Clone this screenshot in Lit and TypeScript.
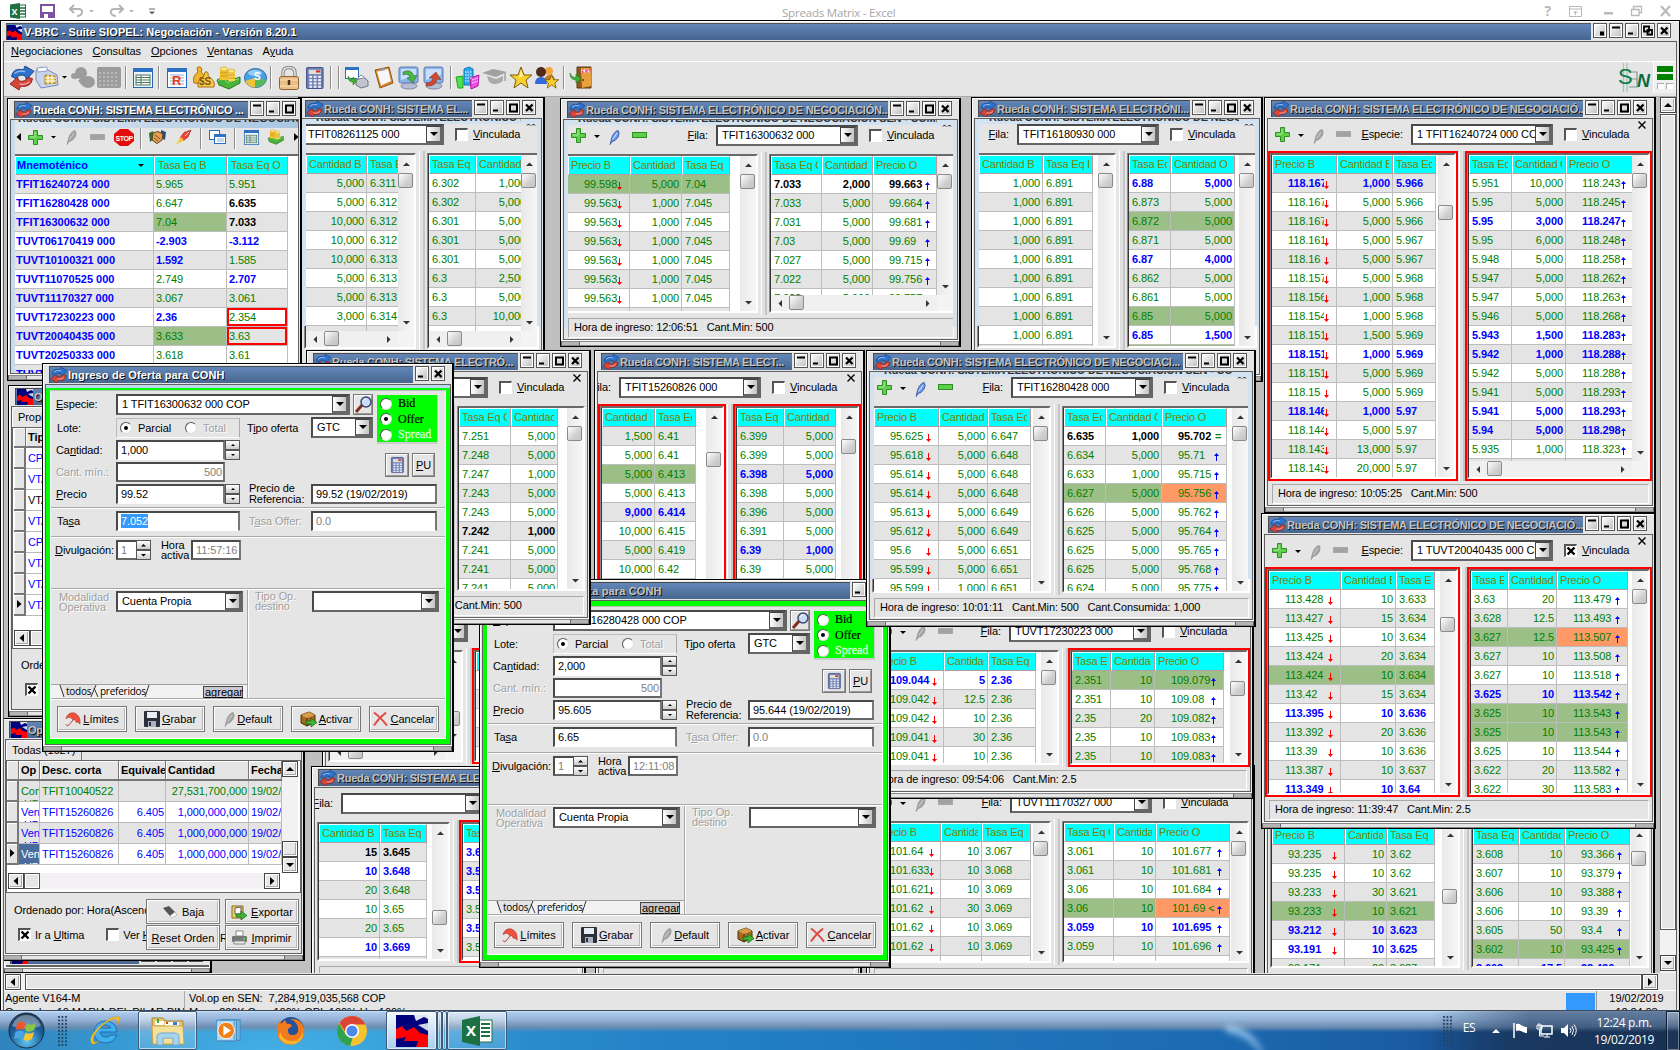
import { LitElement, html, svg, css, nothing } from "lit";

/* ---------- shared styles ---------- */
const base = css`
  * { box-sizing: border-box; }
  :host { font-family: "Liberation Sans", Arial, sans-serif; font-size: 11px; letter-spacing: -0.08px; color: #000; line-height: 12px; }
  u { text-underline-offset: 1px; }
  svg { display: block; flex: none; overflow: visible; }
  .chk { width: 13px; height: 13px; background: #fff; border: 1px solid #fff; border-top: 2px solid #555; border-left: 2px solid #555; flex: none; display: flex; align-items: center; justify-content: center; }
  .cbtn { width: 16px; border: 1px solid #444; background: linear-gradient(90deg, #fff, #c4c4c4); border-right: 2px solid #666; border-bottom: 2px solid #666; display: flex; align-items: center; justify-content: center; flex: none; }
  .combo { height: 21px; border: 2px solid #666; border-top-color: #4a4a4a; border-left-color: #4a4a4a; background: #fff; display: flex; align-items: stretch; flex: none; overflow: hidden; }
  .combo span { flex: 1; min-width: 0; overflow: hidden; white-space: pre; padding: 2px 0 0 4px; }
`;

/* ---------- icons ---------- */
const S = (w: number, h: number, vb: string, c: unknown) => html`<svg width=${w} height=${h} viewBox=${vb}>${c}</svg>`;
const rueda = (n = 16) => S(n, n, "0 0 16 16", svg`
  <path d="M1 7Q2 1 9 2.500L10 0L16 3.500L11 9L10 6.500Q6 5 4 8.500Z" fill="#2d72cc" stroke="#173f80" stroke-width=".6"/>
  <path d="M3 5Q6 2.500 10 3.800" stroke="#8fbdf0" fill="none"/>
  <path d="M15 8.500Q14 14.500 7 13.500L6 16L0 12L5 7.500L6 10Q10 11 12 7.500Z" fill="#d8463a" stroke="#7f1d18" stroke-width=".6"/>
  <path d="M13 10.500Q10 13 6.500 12" stroke="#f2a49c" fill="none"/>`);
const siopel = (n = 16) => S(n, n, "0 0 16 16", svg`
  <rect width="16" height="16" fill="#00007c"/><path d="M9 0L10 3L14 1L16 2V0Z" fill="#dfe4ee"/><path d="M11 5L16 8V4Z" fill="#cfd5e4"/>
  <path d="M0 7L3 5.500L5 8L9 6L12 9L16 10V16H10L11 13L4 13L5 11L0 12Z" fill="#f00"/>`);
const down = (w = 8) => S(w, w / 2, "0 0 8 4", svg`<path d="M0 0H8L4 4Z" fill="#000"/>`);
const cross = (n = 7, w = 2) => S(n, n, "0 0 8 8", svg`<path d="M.5 .5L7.500 7.500M7.500 .5L.5 7.500" stroke="#000" stroke-width=${w}/>`);
const plus = () => S(15, 15, "0 0 15 15", svg`<path d="M5.500 .5H9.500V5.500H14.500V9.500H9.500V14.500H5.500V9.500H.5V5.500H5.500Z" fill="#62cf4c" stroke="#2f8f27"/><path d="M7 2V7H2" stroke="#a6eb94" fill="none"/>`);
const minus = (on: boolean) => S(15, 6, "0 0 15 6", svg`<rect x=".5" y=".5" width="14" height="5" fill=${on ? "#5fcf4a" : "#a2a2a2"} stroke=${on ? "#2f8f27" : "#a8a8a8"}/>`);
const pencil = (on: boolean, n = 15) => S(n * 0.75, n, "0 0 11 15", svg`<path d="M1 14.500L2.500 8Q5 1 9 .5Q11 3 9 7Q6 11.500 3 11.500Z" fill=${on ? "#6d98e6" : "#a4a4a4"} stroke=${on ? "#2c4fa0" : "#989898"} stroke-width=".8"/><path d="M3.500 9.500L8 3" stroke=${on ? "#dfe9ff" : "#d0d0d0"}/>`);
const arrowD = () => S(5, 8, "0 0 5 8", svg`<path d="M2 0H3V5H5L2.500 8L0 5H2Z" fill="#f00"/>`);
const arrowU = () => S(5, 8, "0 0 5 8", svg`<path d="M2 8H3V3H5L2.500 0L0 3H2Z" fill="#00f"/>`);
const tri = (d: string) => S(7, 7, "0 0 7 7", svg`<path d=${{ u: "M0 5L3.500 1.500L7 5Z", d: "M0 2L3.500 5.500L7 2Z", l: "M5 0L1.500 3.500L5 7Z", r: "M2 0L5.500 3.500L2 7Z" }[d] ?? ""} fill="#333"/>`);
const big = (d: string) => S(8, 8, "0 0 8 8", svg`<path d=${{ u: "M0 6L4 2L8 6Z", d: "M0 2L4 6L8 2Z", l: "M6 0L1.500 4L6 8Z", r: "M2 0L6.500 4L2 8Z" }[d] ?? ""} fill="#000"/>`);
const calcIcon = (n = 20) => S(n * 0.8, n, "0 0 16 20", svg`<rect x=".5" y=".5" width="15" height="19" rx="1" fill="#6f7fb4" stroke="#48568e"/><rect x="2.500" y="2.500" width="11" height="4" fill="#dbe2d4"/><path d="M9 4H13" stroke="#c33" stroke-width="2"/>
  ${[8, 11, 14, 17].map(y => [3, 7, 11].map(x => svg`<rect x=${x} y=${y} width="2.600" height="1.900" fill="#eef1fa"/>`))}`);
const gridIcon = (n = 20) => S(n, n, "0 0 20 20", svg`<rect x=".5" y=".5" width="19" height="19" fill="#eef4fb" stroke="#2a66b0"/><rect x="0" y="0" width="20" height="4" fill="#2c71c4"/><rect x="3" y="7" width="14" height="10" fill="#fff" stroke="#46765a"/><path d="M3 9.500H17M3 12H17M3 14.500H17M8 7V17" stroke="#46765a"/>`);
const handIcon = (n = 24) => S(n, n, "0 0 24 24", svg`<path d="M0 14L6 11L11 15L23 11L23 17L12 23L2 19Z" fill="#49b238" stroke="#2a7d20"/><path d="M1 14.500L6 12L11 16.500L22 12.500" stroke="#96e07c" fill="none"/><path d="M3 3H11V14H3Z" fill="#f2c32c"/><path d="M11 5H18V15H11Z" fill="#f7d552"/><ellipse cx="7" cy="3" rx="4" ry="2" fill="#fbe680" stroke="#c9951a" stroke-width=".6"/><ellipse cx="14.500" cy="5" rx="3.500" ry="2" fill="#fbe680" stroke="#c9951a" stroke-width=".6"/><path d="M3 7H11M3 10H11M11 9H18M11 12H18" stroke="#c9951a"/>`);
const starPath = "M12 1L15 9L23 9L17 14L19 22L12 17L5 22L7 14L1 9L9 9Z";
const monitor = (c: string, d: string) => S(22, 24, "0 0 22 24", svg`<rect x="1" y="1" width="19" height="16" rx="2" fill="#8db4e8" stroke="#5a7cb4"/><path d="M3 3H18V9L3 14Z" fill="#c9defa"/><ellipse cx="11" cy="20" rx="8" ry="3" fill="#b6bfd4" stroke="#7e8ba6"/><path d=${d} fill=${c} stroke="#333" stroke-width=".4"/>`);

const icons: Record<string, () => unknown> = {
  swap: () => rueda(24),
  register: () => S(24, 23, "0 0 24 23", svg`<path d="M1 4L6 1L11 3L22 9L23 19L6 22L1 14Z" fill="#c9d3ec" stroke="#7b8bb8"/><path d="M2 2L12 1L12 5L3 6Z" fill="#fff" stroke="#93a0c4"/><path d="M10 9L20 10L21 17L10 18Z" fill="#e8c046" stroke="#a98322"/><path d="M10 12H21M10 15H21M13 9V18M17 9V18" stroke="#fff"/>`),
  caret: () => down(5),
  blobs: () => S(24, 22, "0 0 24 22", svg`<circle cx="10" cy="6" r="6" fill="#9c9c9c"/><ellipse cx="4" cy="9" rx="4" ry="3" fill="#9c9c9c"/><ellipse cx="17" cy="15" rx="7" ry="6" fill="#9c9c9c"/><path d="M9 12L13 17" stroke="#9c9c9c" stroke-width="5"/>`),
  cal: () => S(24, 21, "0 0 24 21", svg`<rect width="24" height="21" rx="2" fill="#9c9c9c"/><path d="M2 6H22M2 10H22M2 14H22M2 18H22" stroke="#d6d6d6" stroke-dasharray="2 2"/>`),
  sep: () => S(3, 23, "0 0 3 23", svg`<path d="M.5 0V23" stroke="#8c8c8c"/><path d="M1.500 0V23" stroke="#fff"/>`),
  table: () => gridIcon(20),
  r: () => S(20, 20, "0 0 20 20", svg`<rect x=".5" y=".5" width="19" height="19" fill="#fff" stroke="#2466bd"/><rect width="20" height="4" fill="#2c71c4"/><path d="M3 7H17M3 10H17M3 13H17M3 16H17" stroke="#86b0dc"/><text x="5" y="17" font-size="13" font-weight="700" fill="#f03a10" font-family="Liberation Sans">R</text>`),
  bags: () => S(23, 23, "0 0 23 23", svg`<path d="M5 2Q8 -1 10 3L9 6Q16 12 12 18L2 17Q0 10 6 6Z" fill="#f0b52c" stroke="#a5701a"/><path d="M13 6Q17 5 16 10Q24 15 22 21H6Q5 14 12 10Z" fill="#f9cd4a" stroke="#a5701a"/><text x="7" y="19" font-size="10" font-weight="700" fill="#8c5208" font-family="Liberation Sans">$S</text>`),
  hand: () => handIcon(24),
  globe: () => S(23, 20, "0 0 23 20", svg`<ellipse cx="11.500" cy="10" rx="11" ry="9.500" fill="#4aa0e4" stroke="#2c6cb0"/><path d="M11 10L1 13Q4 19 11 19.500Z" fill="#f0c43a"/><path d="M11 10L22 12Q20 19 11 19.500Z" fill="#58bb5a"/><ellipse cx="11" cy="5" rx="7" ry="3" fill="#cce8fb" opacity=".6"/><text x="10" y="12" font-size="10" font-weight="700" fill="#fff" font-family="Liberation Sans">S</text>`),
  lock: () => S(20, 24, "0 0 20 24", svg`<path d="M4 12V7Q4 1.500 10 1.500Q16 1.500 16 7V12" fill="none" stroke="#8a8a8a" stroke-width="3.500"/><path d="M4 12V7Q4 1.500 10 1.500Q16 1.500 16 7V12" fill="none" stroke="#e2e2e2" stroke-width="1.500"/><rect x=".5" y="10.500" width="19" height="13" rx="2" fill="#e9bd84" stroke="#8d6231"/><path d="M1 14H19M1 20H19" stroke="#f9e0ba"/><path d="M10 14V19" stroke="#4b3215" stroke-width="2.500"/>`),
  calc: () => calcIcon(22),
  print: () => S(24, 22, "0 0 24 22", svg`<rect x=".5" y=".5" width="13" height="11" fill="#fff" stroke="#2a6ac0"/><rect width="14" height="3" fill="#2c71c4"/><path d="M11 13L19 10L23 14V19L16 21L11 18Z" fill="#bfc4ce" stroke="#6c7280"/><path d="M12 12L16 8L20 11Z" fill="#fff" stroke="#8a8f9c"/><path d="M3 9Q4 12 8 12V10L12 14L8 18V15Q3 15 3 9Z" fill="#3daf33" stroke="#1e7a18" stroke-width=".6"/>`),
  clip: () => S(20, 23, "0 0 20 23", svg`<path d="M1 4L15 1L19 17L6 22Z" fill="#d98a2e" stroke="#8e5312"/><path d="M3 5.500L14 3L17 15L7 19.500Z" fill="#f6f6fb"/><path d="M6 3L11 1V4L7 5Z" fill="#999"/>`),
  monG: () => monitor("#45b93a", "M5 6Q13 2 16 10L19 9L15 17L9 12L12 11Q10 7 5 9Z"),
  monR: () => monitor("#d9452c", "M3 20Q13 21 14 13L18 14L13 6L6 12L10 12Q9 17 3 17Z"),
  build: () => S(24, 23, "0 0 24 23", svg`<path d="M8 3L13 1L17 3V19H8Z" fill="#27a8f0" stroke="#1477b6"/><path d="M0 11L7 10V22H2Z" fill="#4fe052" stroke="#24a32a"/><path d="M14 12L23 9L22 20L15 23Z" fill="#f04ae8" stroke="#a520a0"/><path d="M9 6H16M9 9H16M9 12H16M9 15H14M16 14L22 12M16 17L22 15" stroke="#fff" stroke-dasharray="1.500 1"/>`),
  cap: () => S(25, 17, "0 0 25 17", svg`<path d="M0 4L11 0L25 3L14 8Z" fill="#a0a0a0"/><path d="M5 7L14 10L21 7V12Q14 18 7 13Z" fill="#ababab"/><path d="M23 4V12" stroke="#a0a0a0" stroke-width="1.500"/>`),
  star: () => S(24, 24, "0 0 24 24", svg`<path d=${starPath} fill="#f8d12c" stroke="#7d5a0e"/><path d="M12 4L14 10L10 12Z" fill="#fdf2a6"/>`),
  users: () => S(24, 24, "0 0 24 24", svg`<circle cx="14" cy="5" r="4" fill="#f1a640"/><path d="M9 16Q9 9 15 9Q20 9 20 15Z" fill="#c27a1c"/><circle cx="6" cy="6" r="5" fill="#52291a"/><path d="M0 18Q0 11 6 11Q12 11 12 18Z" fill="#2f68e0"/><path transform="translate(9 8) scale(.64)" d=${starPath} fill="#f8d12c" stroke="#7d5a0e" stroke-width="1.300"/>`),
  exit: () => S(22, 23, "0 0 22 23", svg`<path d="M7 1H21V22H7Z" fill="#8e5a1e" stroke="#5c3810"/><path d="M11 2H21V20L12 22Z" fill="#e8a03a"/><rect x="11" y="3" width="9" height="4" fill="#fff"/><text x="11.500" y="7" font-size="4.500" font-weight="700" fill="#e01010" font-family="Liberation Sans">EXIT</text><circle cx="13" cy="14" r="1" fill="#5c3810"/><path d="M0 7Q3 13 6 11V8L11 13L6 17V14Q0 14 0 7Z" fill="#3fae35" stroke="#1e7a18" stroke-width=".6"/>`),
  plus, minusOff: () => minus(false), pencilOff: () => pencil(false),
  tleft: () => big("l"), tright: () => big("r"),
  stop: () => S(20, 17, "0 0 20 17", svg`<path d="M6 0H14L20 5V12L14 17H6L0 12V5Z" fill="#e30c0c"/><text x="1.500" y="11.500" font-size="7" font-weight="700" fill="#fff" letter-spacing="-.4" font-family="Liberation Sans">STOP</text>`),
  shake: () => S(17, 14, "0 0 17 14", svg`<path d="M0 3L4 1L5 9L1 12Z" fill="#2e6f3a"/><path d="M17 2L12 0L12 8L16 10Z" fill="#274f86"/><path d="M4 3L9 1.500L14 4L13 10L8 13.500L3 10Z" fill="#e0a055" stroke="#6c3c10"/><path d="M6 5L11 9M5 8L9 11" stroke="#8a4f1a"/>`),
  rocket: () => S(15, 15, "0 0 15 15", svg`<path d="M15 0L8 2.500L4 8L7 11L12 7Z" fill="#f0443a" stroke="#9c1c14" stroke-width=".6"/><path d="M9 6L13 2" stroke="#ffd0c8"/><path d="M5 7L0 14.500L8 10.500Z" fill="#f9c52c"/>`),
  wins: () => S(17, 14, "0 0 17 14", svg`<rect x=".5" y=".5" width="10" height="9" fill="#fff" stroke="#2a6ac0"/><rect x="5.500" y="4.500" width="11" height="9" fill="#fff" stroke="#2a6ac0"/><rect x="5" y="4" width="12" height="3" fill="#2c71c4"/><path d="M8 9H15M8 11H15" stroke="#86b0dc"/>`),
  gridS: () => gridIcon(15), handS: () => handIcon(16),
  lens: () => S(17, 17, "0 0 17 17", svg`<path d="M1 16L8 8" stroke="#7e2c1c" stroke-width="3"/><circle cx="11" cy="6" r="5" fill="#c9dcf4" stroke="#3b4572" stroke-width="1.500"/><path d="M8 5Q9 3 11 3" stroke="#fff" fill="none"/>`),
  umbrella: () => S(16, 15, "0 0 17 16", svg`<path d="M1 7Q3 0 10 1Q17 4 16 13Q14 10 12 11Q11 7 8 8Q6 4 1 7Z" fill="#f0503e" stroke="#a82418" stroke-width=".6"/><path d="M9 8L4 14Q2 16 1 13" fill="none" stroke="#b83325"/>`),
  disk: () => S(16, 16, "0 0 16 16", svg`<rect width="16" height="16" rx="1" fill="#2b2f3a"/><rect x="3" y="1" width="10" height="6" fill="#e9ecf2"/><rect x="4" y="10" width="8" height="6" fill="#aab1c0"/><rect x="5" y="11" width="2" height="4" fill="#2b2f3a"/>`),
  quill: () => pencil(false, 15),
  box: () => S(17, 17, "0 0 17 17", svg`<path d="M1 4L9 1L15 4V11L7 15L1 12Z" fill="#a4691f" stroke="#51300a"/><path d="M1 4L7 7L15 4L9 1Z" fill="#d79d4c"/><path d="M7 7V15" stroke="#51300a"/><path d="M6 10H11V7L17 11.500L11 16V13H6Z" fill="#3fb535" stroke="#17660f" stroke-width=".7"/>`),
  redx: () => S(15, 16, "0 0 16 16", svg`<path d="M1 1Q8 6 15 15M14 1Q6 7 1 15" stroke="#df4a40" stroke-width="2" fill="none"/>`),
  eraser: () => S(16, 14, "0 0 16 14", svg`<path d="M1 3L7 1L13 7L8 11Z" fill="#555"/><path d="M8 11L13 7L15 10L10 13Z" fill="#fff" stroke="#999" stroke-width=".6"/>`),
  exportar: () => S(16, 16, "0 0 16 16", svg`<path d="M1 2H12V14H1Z" fill="#f3d06a" stroke="#8a6a1a"/><path d="M4 4L10 3V10H4Z" fill="#fff" stroke="#557"/><path d="M5 10H10V7L16 11.500L10 16V13H5Z" fill="#3fb535" stroke="#17660f" stroke-width=".7"/>`),
  printer: () => S(15, 14, "0 0 15 14", svg`<path d="M4 0H11V5H4Z" fill="#fff" stroke="#888"/><rect y="5" width="15" height="6" rx="1" fill="#777"/><path d="M2 10H13V13H2Z" fill="#ececec" stroke="#888"/><rect x="11" y="7" width="2" height="1.500" fill="#3f3"/>`),
};

/* ---------- MDI window frame ---------- */
const glyphs: Record<string, unknown> = {
  u: svg`<path d="M2 2H10V4H2Z" fill="#000"/>`,
  m: svg`<path d="M2 8H7V10H2Z" fill="#000"/>`,
  x: svg`<path d="M3 3H10V10H3Z" fill="none" stroke="#000" stroke-width="2"/>`,
  c: svg`<path d="M3 3L9.500 9.500M9.500 3L3 9.500" stroke="#000" stroke-width="2.300"/>`,
  d: svg`<rect x="6" y="7" width="4" height="4" fill="#000"/>`,
  r: svg`<path d="M2 2H7V7H2ZM5.500 5.500H10V10H5.500Z" fill="#eee" stroke="#000" stroke-width="1.800"/>`,
};
const winBtnCss = css`
  .btns { display: flex; gap: 2px; padding-left: 2px; flex: none; }
  .wb { width: 14px; height: 15px; border: 1px solid #555; outline: 1px solid #fff; outline-offset: -2px; background: linear-gradient(135deg, #fff, #bdbdbd); }
`;
const winBtns = (s: string) => html`<div class="btns">${[...s].map(k => html`<div class="wb"><svg width="12" height="13" viewBox="0 0 12 12">${glyphs[k]}</svg></div>`)}</div>`;

class MdiWindow extends LitElement {
  static properties = { heading: {}, icon: {}, active: { type: Boolean }, btns: {} };
  declare heading: string; declare icon: string; declare active: boolean; declare btns: string;
  static styles = [base, winBtnCss, css`
    :host { position: absolute; box-sizing: border-box; display: flex; flex-direction: column; background: #e5e5e5; border: 1px solid #000; border-right-width: 2px; box-shadow: inset 1px 1px #fff; overflow: hidden; }
    .tb { margin: 2px 7px 1px 6px; height: 17px; flex: none; display: flex; }
    :host(.narrow) .tb { margin-right: 4px; }
    .cap { flex: 1; min-width: 0; display: flex; align-items: center; gap: 1px; padding-left: 1px; background: linear-gradient(#6286b8, #48678f); border-top: 1px solid #4a4a4a; border-left: 1px solid #4a4a4a; overflow: hidden; }
    .t { font-weight: 700; color: #c4c4c4; white-space: pre; text-shadow: 1px 1px #111; letter-spacing: -0.26px; font-size: 11px; padding-bottom: 1px; }
    :host(.dlg) .t { letter-spacing: 0.14px; }
    .t.on { color: #fff; }
    .body { flex: 1; min-height: 0; margin: 0 1px 0 2px; border: 1px solid #606060; position: relative; display: flex; overflow: hidden; }
    ::slotted(*) { flex: 1; min-width: 0; }
    .foot { height: 6px; flex: none; border-top: 1px solid #fff; display: flex; }
    .foot i { height: 5px; border: 1px solid #888; border-width: 1px 0; flex: 1; }
    .foot i.k { flex: 0 0 19px; background: #b4b4b4; border-right: 1px solid #666; border-left: 1px solid #666; }
  `];
  render() {
    return html`<div class="tb"><div class="cap">${this.icon === "siopel" ? siopel(16) : rueda(16)}<span class="t ${this.active ? "on" : ""}">${this.heading}</span></div>${winBtns(this.btns ?? "umxc")}</div>
      <div class="body"><slot></slot></div><div class="foot"><i class="k"></i><i></i><i class="k"></i></div>`;
  }
}
customElements.define("mdi-window", MdiWindow);

/* ---------- order book ---------- */
type Col = [string, number, string];
interface Pane { cols: Col[]; rows: string[]; alt?: number; red?: boolean; thumb?: number; ar?: number; dir?: string; hs?: boolean }
interface Book { x: number; y: number; r: number; b: number; title: string; lw: number; lead?: number; icons?: string; label?: string; combo?: string; checked?: boolean; glass?: boolean; L: Pane; R: Pane; status?: string; btns?: string }

class BookView extends LitElement {
  static properties = { book: { attribute: false } };
  declare book: Book;
  static styles = [base, css`
    :host { display: flex; flex-direction: column; position: relative; background: #e5e5e5; overflow: hidden; }
    .bar { height: 32px; flex: none; display: flex; align-items: center; padding-bottom: 2px; }
    .lead { display: flex; align-items: center; flex: none; height: 100%; overflow: hidden; justify-content: flex-end; }
    .ic { display: flex; align-items: center; flex: none; padding-left: 7px; margin-right: auto; }
    .ic .a { margin: 2px 9px 0 8px; } .ic .p { margin: 0 12px 0 0; }
    .lead .lb { padding-right: 8px; flex: none; }
    .combo { width: 142px; }
    .chk { margin: 0 5px 0 11px; }
    .cl { margin: -19px 6px 0 auto; flex: none; }
    .panes { flex: 1; min-height: 0; display: flex; }
    .split { width: 7px; flex: none; border-left: 1px solid #e5e5e5; background: #e0e0e0; box-shadow: inset 1px 0 #fff, inset -2px 0 #c6c6c6; }
    .pane { flex: none; border: 2px solid #e5e5e5; display: flex; min-width: 0; }
    .pane.red { border-color: #f00; }
    .pane.rest { flex: 1; }
    .in { flex: 1; min-width: 0; border: 2px solid #fff; border-top-color: #6a6a6a; border-left: 2px ridge #8a8a8a; display: flex; flex-direction: column; background: #f4f4f4; }
    .area { flex: 1; min-height: 0; display: flex; overflow: hidden; }
    .tbl { flex: 1; min-width: 0; background: #fff; overflow: hidden; }
    .row { display: flex; height: 19px; width: max-content; }
    .c { border-right: 1px solid #bdbdbd; border-bottom: 1px solid #bdbdbd; height: 19px; padding: 3px 2px 0 3px; overflow: hidden; white-space: pre; color: #008000; background: #fff; flex: none; }
    .alt .c { background: #e4e4e4; }
    .q { text-align: right; }
    .B .c { color: #00f; font-weight: 700; } .K .c { color: #000; font-weight: 700; }
    .h .c { background: #9cbf87; }
    .o .c.p { background: #ff9966; }
    .c.p { display: flex; padding-left: 16px; padding-right: 0; }
    .v { overflow: hidden; flex: none; }
    .p svg { margin-top: 4px; }
    .eq { color: #008000; margin-left: 1px; }
    .hd .c { background: #0ff; color: #808000; border: 1px solid #b89a9a; border-top-color: #e8ffff; border-left-color: #fff; box-shadow: inset 0 -1px #0ff; padding: 2px 0 0 2px; letter-spacing: -0.2px; font-weight: 400; }
    .hd .c b { display: block; font-weight: 400; overflow: hidden; margin-right: 3px; }
    .vs { width: 16px; flex: none; background: linear-gradient(90deg, #e9e9e9, #f6f6f6); display: flex; flex-direction: column; align-items: center; padding: 6px 0 5px; position: relative; justify-content: space-between; }
    .hs { height: 16px; margin-right: 16px; flex: none; background: #f0f0f0; display: flex; align-items: center; justify-content: space-between; padding: 0 6px; position: relative; }
    .th { position: absolute; width: 15px; height: 15px; border: 1px solid #8a8a8a; border-radius: 2px; background: linear-gradient(135deg, #fff, #d0d0d0 60%, #c4c4c4); }
    .vs .th { left: 0; } .hs .th { left: 18px; top: 0; }
    .st { height: 24px; flex: none; padding: 3px 3px 1px 4px; }
    .st div { height: 20px; border: 1px solid #fff; border-top-color: #a8a8a8; border-left-color: #a8a8a8; padding: 2px 0 0 5px; white-space: pre; letter-spacing: -0.13px; }
    .glass { position: absolute; left: 0; right: 0; top: 0; height: 207px; border: solid #d2e2f0; border-width: 5px 4px 0 4px; pointer-events: none; }
    .ghost { position: absolute; left: 14px; right: 20px; top: 0; height: 2px; overflow: hidden; display: flex; align-items: flex-end; font-weight: 700; white-space: pre; line-height: 7px; color: #333; letter-spacing: -0.2px; }
  `];
  pane(p: Pane, w: number | null) {
    const cell = (v: string, [, cw, k]: Col) => k === "p"
      ? html`<div class="c p" style="width:${cw}px"><span class="v" style="width:${(p.ar ?? 54) - 18}px">${v.replace("=", "")}</span>${v.endsWith("=") ? html`<span class="eq">=</span>` : v === "" ? nothing : p.dir === "u" ? arrowU() : arrowD()}</div>`
      : html`<div class="c ${k}" style="width:${cw}px">${v}</div>`;
    return html`<div class="pane ${p.red ? "red" : ""} ${w === null ? "rest" : ""}" style=${w === null ? "" : `width:${w}px`}><div class="in">
      <div class="area"><div class="tbl">
        <div class="row hd">${p.cols.map(c => html`<div class="c" style="width:${c[1]}px"><b>${c[0]}</b></div>`)}</div>
        ${p.rows.map((r, i) => { const [f, ...v] = r.split("|"); return html`<div class="row ${(i + (p.alt ?? 0)) % 2 ? "alt" : ""} ${[...f].join(" ")}">${p.cols.map((c, j) => cell(v[j] ?? "", c))}</div>`; })}
      </div><div class="vs">${tri("u")}${tri("d")}<div class="th" style="top:${p.thumb ?? 18}px"></div></div></div>
      ${p.hs ? html`<div class="hs">${tri("l")}${tri("r")}<div class="th"></div></div>` : nothing}
    </div></div>`;
  }
  render() {
    const b = this.book;
    const on = b.icons === "on";
    return html`
      <div class="bar"><div class="lead" style="width:${b.lead ?? 0}px">
        ${b.icons ? html`<div class="ic">${plus()}<div class="a">${down(6)}</div><div class="p">${pencil(on)}</div>${minus(on)}</div>` : nothing}
        ${b.label ? html`<span class="lb"><u>${b.label[0]}</u>${b.label.slice(1)}</span>` : nothing}</div>
        <div class="combo"><span>${b.combo ?? ""}</span><div class="cbtn">${down(8)}</div></div>
        <div class="chk">${b.checked ? cross(8, 2.4) : nothing}</div><span><u>V</u>inculada</span>
        <div class="cl">${b.glass ? S(8, 3, "0 0 8 3", svg`<path d="M0 2.500L1.500 1L3 2.500M5 2.500L6.500 1L8 2.500" stroke="#000" fill="none"/>`) : cross(8, 1.4)}</div>
      </div>
      <div class="panes">${this.pane(b.L, b.lw)}<div class="split"></div>${this.pane(b.R, null)}</div>
      <div class="st"><div>${b.status ?? ""}</div></div>
      ${b.glass ? html`<div class="glass"></div><div class="ghost">${"Rueda CONH: SISTEMA ELECTRÓNICO DE NEGOCIACIÓN SEN - COM..."}</div>` : nothing}`;
  }
}
customElements.define("book-view", BookView);

/* ---------- order entry dialog ---------- */
class OrderForm extends LitElement {
  static properties = { d: { attribute: false } };
  declare d: { especie: string; cant: string; precio: string; ref: string; tasa: string; hora: string; sel?: boolean };
  static styles = [base, css`
    :host { display: flex; flex-direction: column; background: #e5e5e5; border: 5px solid #0f0; position: relative; margin: 0 -1px; }
    .in { flex: 1; display: flex; flex-direction: column; border: 1px solid #fff; border-top-color: #bbb; }
    .glass { position: absolute; left: -5px; right: -5px; top: -5px; height: 3px; background: #bcd8ee; }
    .r { display: flex; flex: none; }
    .lb { width: 65px; padding: 4px 0 0 5px; flex: none; white-space: pre; }
    .g { color: #a0a0a0; text-shadow: 1px 1px #fff; }
    .inp { height: 20px; border: 2px solid #777; border-top-color: #4a4a4a; border-left-color: #4a4a4a; border-bottom: 1px solid #fff; background: #fff; padding: 2px 0 0 3px; flex: none; white-space: pre; }
    .inp.d { color: #808080; border-bottom: 2px solid #666; }
    .inp em { font-style: normal; background: #3399ff; color: #fff; padding: 1px 0; }
    .w109 { width: 109px; } .w126 { width: 126px; } .w124 { width: 124px; }
    .spin { width: 15px; height: 20px; display: flex; flex-direction: column; flex: none; }
    .spin i { flex: 1; border: 1px solid #555; background: linear-gradient(#fff, #ccc); display: flex; align-items: center; justify-content: center; }
    .ic { border: 2px solid #999; border-top-color: #fff; border-left-color: #fff; outline: 1px solid #777; outline-offset: -1px; display: flex; align-items: center; justify-content: center; flex: none; background: #e5e5e5; }
    .side { width: 61px; height: 49px; margin: 4px 0 0 4px; background: #0f0; border-right: 1px solid #ccc; border-bottom: 2px solid #ccc; font: 12px/15.500px "Liberation Serif", serif; padding: 1px 0 0 3px; letter-spacing: 0; -webkit-text-stroke: .2px #000; }
    .side div, .lote div { display: flex; align-items: center; gap: 6px; }
    .side .g { color: #d8ffd8; text-shadow: none; -webkit-text-stroke: .3px #d8ffd8; }
    .rad { width: 12px; height: 12px; border-radius: 50%; background: #fff; border: 1px solid #555; border-right-color: #ddd; border-bottom-color: #ddd; display: flex; align-items: center; justify-content: center; flex: none; }
    .rad.s::after { content: ""; width: 4px; height: 4px; border-radius: 50%; background: #000; }
    .lote { width: 124px; height: 20px; border: 1px solid #bbb; border-right-color: #aaa; border-bottom-color: #fff; display: flex; gap: 14px; padding-left: 3px; align-items: center; flex: none; }
    .two { line-height: 10.500px; white-space: pre; }
    hr { border: 0; border-top: 1px solid #a8a8a8; border-bottom: 1px solid #fff; margin: 0; height: 2px; flex: none; }
    .low { flex: 1; min-height: 0; display: flex; }
    .lc { width: 197px; border-right: 1px solid #a8a8a8; box-shadow: 1px 0 #fff; display: flex; flex-direction: column; justify-content: space-between; }
    .tabs { height: 14px; border-top: 1px solid #a0a0a0; background: #f2f2f2; display: flex; font: 11px/12px "Open Sans", sans-serif; letter-spacing: -0.25px; padding-left: 9px; }
    .tabs .ag { margin: 1px 4px 0 auto; width: 40px; height: 12px; border: 1px solid #444; background: #c8c8d2; font: 11px/10px "Liberation Sans"; padding-left: 1px; letter-spacing: 0; text-decoration: underline; }
    .btns { height: 38px; padding: 6px 6px 0; display: flex; justify-content: space-between; flex: none; }
    .b { width: 70px; height: 26px; border: 1px solid #777; outline: 1px solid #fff; outline-offset: -2px; box-shadow: inset -2px -2px #b8b8b8; background: #e5e5e5; display: flex; align-items: center; justify-content: center; gap: 2px; letter-spacing: 0; }
    .c233 .combo { width: 234px; } .gtc .combo { width: 62px; } .cp .combo { width: 127px; }
  `];
  combo(t: string) { return html`<div class="combo"><span>${t}</span><div class="cbtn">${down(8)}</div></div>`; }
  spin(n = 4) { return html`<div class="spin"><i>${S(n, n / 2, "0 0 4 2", svg`<path d="M0 2H4L2 0Z"/>`)}</i><i>${S(n, n / 2, "0 0 4 2", svg`<path d="M0 0H4L2 2Z"/>`)}</i></div>`; }
  render() {
    const d = this.d;
    const btn = (i: string, a: string, t: string) => html`<div class="b">${icons[i]()}<span><u>${a}</u>${t}</span></div>`;
    return html`<div class="in">
      <div class="r" style="height:49px"><div>
        <div class="r c233" style="height:26px;padding-top:3px"><div class="lb"><u>E</u>specie:</div>${this.combo(d.especie)}<div class="ic" style="width:20px;height:21px;margin-left:3px">${icons.lens()}</div></div>
        <div class="r gtc" style="height:23px"><div class="lb" style="padding:5px 0 0 6px">Lote:</div><div class="lote" style="margin-top:1px"><div><i class="rad s"></i>Parcial</div><div class="g"><i class="rad"></i>Total</div></div><div class="lb" style="width:71px;padding:5px 0 0 7px">T<u>i</u>po oferta</div>${this.combo("GTC")}</div>
      </div><div class="side"><div><i class="rad"></i>Bid</div><div><i class="rad s"></i>Offer</div><div class="g"><i class="rad"></i>Spread</div></div></div>
      <div class="r" style="height:44px"><div>
        <div class="r" style="height:22px"><div class="lb">Ca<u>n</u>tidad:</div><div class="inp w109">${d.cant}</div>${this.spin()}</div>
        <div class="r" style="height:22px"><div class="lb g">Cant. mín.:</div><div class="inp d w109" style="text-align:right;padding-right:1px">500</div></div>
      </div><div class="r" style="padding:13px 0 0 145px;gap:3px;height:37px"><div class="ic" style="width:24px">${calcIcon(16)}</div><div class="ic" style="width:23px"><span><u>P</u>U</span></div></div></div>
      <div class="r" style="height:23px"><div class="lb"><u>P</u>recio</div><div class="inp w109">${d.precio}</div>${this.spin()}
        <div class="two" style="width:71px;padding-left:9px;margin-top:-1px">Precio de<br>Referencia:</div><div class="inp w126" style="border-bottom:2px solid #666">${d.ref}</div></div>
      <hr>
      <div class="r" style="height:27px;padding-top:2px"><div class="lb" style="padding-left:6px">Ta<u>s</u>a</div><div class="inp w124">${d.sel ? html`<em>${d.tasa}</em>` : d.tasa}</div><div class="lb g" style="width:71px;padding-left:9px">T<u>a</u>sa Offer:</div><div class="inp w126" style="color:#808080">0.0</div></div>
      <hr>
      <div class="r" style="height:50px;padding-top:2px"><div class="lb" style="padding-left:4px"><u>D</u>ivulgación:</div><div class="inp d" style="width:20px;border-right:0">1</div>${this.spin(5)}<div class="two" style="width:40px;padding:0 0 0 10px;line-height:10px">Hora<br>activa</div><div class="inp d" style="width:50px">${d.hora}</div></div>
      <hr>
      <div class="low"><div class="lc"><div class="r cp" style="padding-top:1px"><div class="two g" style="width:65px;padding:1px 0 0 8px;line-height:10px">Modalidad<br>Operativa</div>${this.combo("Cuenta Propia")}</div>
        <div class="tabs"><svg width="130" height="13" viewBox="0 0 130 13"><path d="M0 0L4 12H31L36 0Z" fill="#e5e5e5"/><path d="M38 12L34 3M0 0L4 12M36 0L31 12M89 0L85 12" stroke="#333" fill="none"/><text x="6" y="10" font-size="10">todos</text><text x="40" y="10" font-size="10">preferidos</text></svg><div class="ag">agregar</div></div></div>
        <div class="r cp" style="padding-top:1px"><div class="two g" style="width:64px;padding:0 0 0 7px;line-height:10px">Tipo Op.<br>destino</div>${this.combo("")}</div></div>
      <hr>
      <div class="btns">${btn("umbrella", "L", "ímites")}${btn("disk", "G", "rabar")}${btn("quill", "D", "efault")}${btn("box", "A", "ctivar")}${btn("redx", "C", "ancelar")}</div>
    </div>${d.sel ? html`<div class="glass"></div>` : nothing}`;
  }
}
customElements.define("order-form", OrderForm);

/* ---------- data ---------- */
const T = "Rueda CONH: SISTEMA ELECTRÓNICO DE NEGOCIACI";
const rep = (n: number, s: string) => Array.from({ length: n }, () => s);
const stub: Pane = { cols: [["", 60, "q"]], rows: [] };
const books: Record<string, Book> = {
  b2: { x: 298, y: 97, r: 545, b: 383, title: "Rueda CONH: SISTEMA EL...", lw: 116, lead: -2, combo: "TFIT08261125 000", glass: true,
    L: { cols: [["Cantidad B", 61, "q"], ["Tasa E", 40, "t"]], alt: 1, hs: true, rows: ["|5,000|6.311", "|5,000|6.312", "|10,000|6.312", "|10,000|6.312", "|10,000|6.313", "|5,000|6.313", "|5,000|6.313", "|3,000|6.314", "||"] },
    R: { cols: [["Tasa Eq", 47, "t"], ["Cantidad", 53, "q"]], hs: true, rows: ["|6.302|1,000", "|6.302|5,000", "|6.301|5,000", "|6.301|5,000", "|6.301|5,000", "|6.3|2,500", "|6.3|5,000", "|6.3|10,000", "||"] } },
  b3: { x: 560, y: 98, r: 961, b: 347, title: "Rueda CONH: SISTEMA ELECTRÓNICO DE NEGOCIACIÓN...", lw: 196, lead: 152, icons: "on", label: "Fila:", combo: "TFIT16300632 000", glass: true, status: "Hora de ingreso: 12:06:51   Cant.Min: 500",
    L: { cols: [["Precio B", 62, "p"], ["Cantidad", 52, "q"], ["Tasa Eq", 48, "t"]], ar: 51, rows: ["h|99.598|5,000|7.04", ...rep(6, "|99.563|1,000|7.045"), "|||"] },
    R: { cols: [["Tasa Eq O", 51, "t"], ["Cantidad", 51, "q"], ["Precio O", 64, "p"]], ar: 54, dir: "u", hs: true, rows: ["K|7.033|2,000|99.663", "|7.033|5,000|99.664", "|7.031|5,000|99.681", "|7.03|5,000|99.69", "|7.027|5,000|99.715", "|7.022|5,000|99.756", "|7.022|5,000|99.757"] } },
  b4: { x: 971, y: 97, r: 1263, b: 382, title: "Rueda CONH: SISTEMA ELECTRÓNI...", lw: 143, lead: 42, label: "Fila:", combo: "TFIT16180930 000", glass: true,
    L: { cols: [["Cantidad B", 64, "q"], ["Tasa Eq B", 50, "t"]], rows: rep(10, "|1,000|6.891") },
    R: { cols: [["Tasa Eq", 42, "t"], ["Cantidad O", 64, "q"]], rows: ["B|6.88|5,000", "|6.873|5,000", "h|6.872|5,000", "|6.871|5,000", "B|6.87|4,000", "|6.862|5,000", "|6.861|5,000", "h|6.85|5,000", "B|6.85|1,500", "h|6.85|5,000"] } },
  b6b: { x: 1264, y: 768, r: 1655, b: 1002, title: T + "Ó...", lw: 194, lead: 143,
    L: { cols: [["Precio B", 73, "p"], ["Cantidad", 42, "q"], ["Tasa Eq", 48, "t"]], ar: 62, alt: 1, thumb: 63, rows: ["|93.235|10|3.62", "|93.235|10|3.62", "|93.233|30|3.621", "h|93.233|10|3.621", "B|93.212|10|3.623", "B|93.191|10|3.625", "|93.171|20|3.627"] },
    R: { cols: [["Tasa Eq", 46, "t"], ["Cantidad", 46, "q"], ["Precio O", 65, "p"]], ar: 54, dir: "u", alt: 1, thumb: 25, rows: ["|3.608|10|93.366", "|3.607|10|93.379", "|3.606|10|93.388", "|3.606|10|93.39", "|3.605|50|93.4", "h|3.602|10|93.425", "B|3.602|17.5|93.426"] } },
  b5: { x: 1264, y: 97, r: 1656, b: 513, title: T + "Ó...", lw: 190, lead: 143, icons: "off", label: "Especie:", combo: "1 TFIT16240724 000 COP", status: "Hora de ingreso: 10:05:25   Cant.Min: 500",
    L: { cols: [["Precio B", 65, "p"], ["Cantidad B", 56, "q"], ["Tasa Eq", 43, "t"]], red: true, ar: 54, alt: 1, thumb: 50, rows: ["B|118.167|1,000|5.966", "|118.167|5,000|5.966", "|118.167|5,000|5.966", "|118.161|5,000|5.967", "|118.16|5,000|5.967", "|118.157|5,000|5.968", "|118.156|1,000|5.968", "|118.154|1,000|5.968", "|118.151|1,500|5.969", "B|118.151|1,000|5.969", "|118.151|5,000|5.969", "|118.15|5,000|5.969", "B|118.146|1,000|5.97", "|118.144|5,000|5.97", "|118.143|13,000|5.97", "|118.143|20,000|5.97"] },
    R: { cols: [["Tasa Eq", 43, "t"], ["Cantidad O", 54, "q"], ["Precio O", 67, "p"]], red: true, ar: 57, dir: "u", hs: true, rows: ["|5.951|10,000|118.243", "|5.95|5,000|118.245", "B|5.95|3,000|118.247", "|5.95|6,000|118.248", "|5.948|5,000|118.258", "|5.947|5,000|118.262", "|5.947|5,000|118.263", "|5.946|5,000|118.268", "B|5.943|1,500|118.283", "B|5.942|1,000|118.288", "|5.942|5,000|118.288", "|5.941|5,000|118.293", "B|5.941|5,000|118.293", "B|5.94|5,000|118.298", "|5.935|1,000|118.323", "|||"] } },
  b6: { x: 1261, y: 513, r: 1656, b: 829, title: T + "Ó...", lw: 195, lead: 146, icons: "off", label: "Especie:", combo: "1 TUVT20040435 000 COP", checked: true, status: "Hora de ingreso: 11:39:47   Cant.Min: 2.5",
    L: { cols: [["Precio B", 72, "p"], ["Cantidad B", 55, "q"], ["Tasa E", 39, "t"]], red: true, ar: 61, thumb: 46, rows: ["|113.428|10|3.633", "|113.427|15|3.634", "|113.425|10|3.634", "|113.424|20|3.634", "h|113.424|10|3.634", "|113.42|15|3.634", "B|113.395|10|3.636", "|113.392|20|3.636", "|113.39|10|3.636", "|113.387|10|3.637", "B|113.349|10|3.64"] },
    R: { cols: [["Tasa E", 37, "t"], ["Cantidad", 49, "q"], ["Precio O", 71, "p"]], red: true, ar: 60, dir: "u", rows: ["|3.63|20|113.479", "|3.628|12.5|113.493", "ho|3.627|12.5|113.507", "|3.627|10|113.508", "|3.627|10|113.518", "B|3.625|10|113.542", "h|3.625|10|113.543", "h|3.625|10|113.543", "|3.625|10|113.544", "|3.622|20|113.582", "|3.622|30|113.583"] } },
  b11: { x: 322, y: 594, r: 595, b: 796, title: T, lw: 139, lead: 0, L: { ...stub, thumb: 59, hs: true }, R: { cols: [["Tasa Eq", 47, "t"]], red: true, rows: ["|3.6", "|3.6", "|3.6", "|3.6", "|3.6"] } },
  b14: { x: 595, y: 765, r: 862, b: 997, title: T, lw: 120, L: stub, R: stub },
  b13: { x: 866, y: 765, r: 1255, b: 997, title: T, lw: 183, lead: 140, icons: "off", label: "Fila:", combo: "TUVT11170327 000", status: "Hora de ingreso: 11:39:47   Cant.Min: 2.5",
    L: { cols: [["Precio B", 67, "p"], ["Cantidad", 41, "q"], ["Tasa Eq B", 49, "t"]], ar: 57, rows: ["|101.64|10|3.067", "|101.633|10|3.068", "|101.621|10|3.069", "|101.62|30|3.069", "|101.62|10|3.069", "|101.62|10|3.069", "|||"] },
    R: { cols: [["Tasa Eq O", 50, "t"], ["Cantidad", 42, "q"], ["Precio O", 74, "p"]], ar: 63, dir: "u", rows: ["|3.061|10|101.677", "|3.061|10|101.681", "|3.06|10|101.684", "ho|3.06|10|101.69 <", "B|3.059|10|101.695", "|3.059|10|101.696", "|||"] } },
  b12: { x: 311, y: 766, r: 586, b: 995, title: T, lw: 137, lead: 26, label: "Fila:", combo: "",
    L: { cols: [["Cantidad B", 61, "q"], ["Tasa Eq", 47, "t"]], alt: 1, thumb: 86, rows: ["K|15|3.645", "B|10|3.648", "|20|3.648", "|10|3.65", "|20|3.65", "B|10|3.669", "||"] },
    R: { cols: [["Tasa Eq", 47, "t"], ["Cantidad", 50, "q"]], red: true, rows: ["B|3.6|10", "B|3.59|10", "B|3.58|10", "|3.57|10", "B|3.56|10", "|3.55|10", "||"] } },
  b10: { x: 866, y: 594, r: 1254, b: 799, title: T, lw: 191, lead: 139, icons: "off", label: "Fila:", combo: "TUVT17230223 000", status: "Hora de ingreso: 09:54:06   Cant.Min: 2.5",
    L: { cols: [["Precio B", 70, "p"], ["Cantidad", 44, "q"], ["Tasa Eq", 48, "t"]], ar: 60, rows: ["B|109.044|5|2.36", "|109.042|12.5|2.36", "|109.042|10|2.36", "|109.041|30|2.36", "|109.041|10|2.36"] },
    R: { cols: [["Tasa E", 39, "t"], ["Cantidad", 44, "q"], ["Precio O", 69, "p"]], red: true, ar: 58, dir: "u", alt: 1, thumb: 29, rows: ["h|2.351|10|109.079", "|2.351|10|109.08", "|2.35|20|109.082", "|2.35|10|109.083", "|2.35|10|109.083"] } },
  b9: { x: 594, y: 350, r: 865, b: 640, title: "Rueda CONH: SISTEMA ELECT...", lw: 128, lead: 21, label: "Fila:", combo: "TFIT15260826 000",
    L: { cols: [["Cantidad B", 53, "q"], ["Tasa Eq", 41, "t"]], red: true, alt: 1, thumb: 44, rows: ["|1,500|6.41", "|5,000|6.41", "h|5,000|6.413", "|5,000|6.413", "B|9,000|6.414", "|10,000|6.415", "|5,000|6.419", "|10,000|6.42", "||"] },
    R: { cols: [["Tasa Eq", 47, "t"], ["Cantidad", 52, "q"]], red: true, alt: 1, thumb: 31, rows: ["|6.399|5,000", "|6.399|5,000", "B|6.398|5,000", "|6.398|5,000", "|6.396|5,000", "|6.391|5,000", "B|6.39|1,000", "|6.39|5,000", "||"] } },
  b8: { x: 306, y: 350, r: 591, b: 625, title: "Rueda CONH: SISTEMA ELECTRÓ...", lw: 138, lead: 36, combo: "", status: " Hora de ingreso: 11:58:21   Cant.Min: 500",
    L: stub, R: { cols: [["Tasa Eq O", 52, "t"], ["Cantidad", 47, "q"]], rows: ["|7.251|5,000", "|7.248|5,000", "|7.247|1,000", "|7.243|5,000", "|7.243|5,000", "K|7.242|1,000", "|7.241|5,000", "|7.241|5,000", "|7.241|5,000"] } },
  b7: { x: 866, y: 350, r: 1256, b: 627, title: T + "...", lw: 183, lead: 141, icons: "on", label: "Fila:", combo: "TFIT16280428 000", glass: true, status: "Hora de ingreso: 10:01:11   Cant.Min: 500   Cant.Consumida: 1,000",
    L: { cols: [["Precio B", 65, "p"], ["Cantidad", 49, "q"], ["Tasa Eq", 43, "t"]], ar: 54, rows: ["|95.625|5,000|6.647", "|95.618|5,000|6.648", "|95.614|5,000|6.648", "|95.614|5,000|6.648", "|95.613|5,000|6.649", "|95.612|5,000|6.649", "|95.6|5,000|6.651", "|95.599|5,000|6.651", "|95.599|1,000|6.651"] },
    R: { cols: [["Tasa Eq", 42, "t"], ["Cantidad O", 56, "q"], ["Precio O", 65, "p"]], ar: 54, dir: "u", rows: ["K|6.635|1,000|95.702=", "|6.634|5,000|95.71", "|6.633|1,000|95.715", "ho|6.627|5,000|95.756", "|6.626|5,000|95.762", "|6.625|5,000|95.764", "|6.625|5,000|95.765", "|6.625|5,000|95.768", "|6.624|5,000|95.775"] } },
};

const mainTools: [string, number][] = [["swap", 25], ["register", 26], ["caret", 9], ["blobs", 27], ["cal", 26], ["sep", 8], ["table", 26], ["sep", 7], ["r", 27], ["bags", 26], ["hand", 26], ["globe", 26], ["sep", 7], ["lock", 28], ["calc", 24], ["sep", 8], ["sep", 8], ["print", 28], ["clip", 25], ["monG", 25], ["monR", 26], ["sep", 8], ["build", 26], ["cap", 27], ["star", 25], ["users", 27], ["sep", 8], ["exit", 26]];
const monTools: [string, number][] = [["tleft", 8], ["plus", 24], ["caret", 12], ["pencilOff", 26], ["minusOff", 24], ["stop", 29], ["sep", 6], ["shake", 26], ["rocket", 26], ["sep", 10], ["wins", 22], ["sep", 14], ["gridS", 18], ["handS", 32], ["tright", 8]];
const monRows = ["TFIT16240724|5.965|5.951", "TFIT16280428|6.647|K6.635", "TFIT16300632|h7.04|K7.033", "TUVT06170419|B-2.903|B-3.112", "TUVT10100321|B1.592|1.585", "TUVT11070525|2.749|B2.707", "TUVT11170327|3.067|3.061", "TUVT17230223|B2.36|x2.354", "TUVT20040435|h3.633|x3.63", "TUVT20250333|3.618|3.61", "TUVT26260331||"];

/* ---------- taskbar ---------- */
class TaskBar extends LitElement {
  static styles = [base, css`
    :host { display: flex; height: 40px; flex: none; position: relative; overflow: hidden; border-top: 1px solid #3c4a5a; color: #fff; font-family: "Open Sans", "Noto Sans", sans-serif; font-size: 12px;
      background: linear-gradient(#cfe2f7 0, #a9c8ea 2px, #97b6da 8px, #6d8db0 16px, rgba(90,125,165,0) 21px), radial-gradient(ellipse 260px 90px at 270px 40px, #43aee4, rgba(60,160,220,0)), linear-gradient(90deg, #2f84bd 0, #3398d4 20%, #2382c6 40%, #1d6cb4 70%, #1a5ca4 84%, #153c6c 90%, #10294a 100%); }
    .dark { position: absolute; inset: 0 0 0 1430px; background: linear-gradient(90deg, rgba(20,40,70,0), rgba(30,55,90,.55) 40%); }
    .flare { position: absolute; left: 1222px; top: 18px; width: 46px; height: 40px; border-top: 7px solid rgba(190,225,255,.75); border-radius: 0 40px 0 0; filter: blur(3px); transform: rotate(12deg); }
    .i { display: flex; align-items: center; justify-content: center; height: 39px; flex: none; position: relative; }
    .on { background: linear-gradient(rgba(255,255,255,.55), rgba(255,255,255,.22) 50%, rgba(255,255,255,.12)); border: 1px solid #3f5a78; box-shadow: inset 0 0 0 1px rgba(255,255,255,.55); border-radius: 2px; height: 39px; }
    .on.hot { background: linear-gradient(#f3f8fd, #c8def2 60%, #a8d0ee); }
    .grip { width: 9px; height: 30px; background: radial-gradient(circle at 1px 1px, #26415e 1px, transparent 1.300px) 0 0 / 3.500px 3.500px; }
    .tray { margin-left: auto; display: flex; align-items: center; position: relative; }
    .clock { width: 84px; text-align: center; line-height: 17px; letter-spacing: -0.35px; }
    .show { width: 14px; height: 40px; border: 1px solid #0d1e33; box-shadow: inset 0 0 0 1px rgba(255,255,255,.35); background: linear-gradient(rgba(255,255,255,.3), rgba(255,255,255,.02) 50%); position: relative; }
  `];
  render() {
    const slot = (w: number, c: unknown, k = "") => html`<div class="i ${k}" style="width:${w}px">${c}</div>`;
    return html`<div class="dark"></div><div class="flare"></div>
      ${slot(53, S(37, 37, "0 0 37 37", svg`<defs><radialGradient id="o" cx=".5" cy=".8" r=".8"><stop offset="0" stop-color="#5fc8f4"/><stop offset=".6" stop-color="#1d5c96"/><stop offset="1" stop-color="#24384e"/></radialGradient></defs><circle cx="18.500" cy="18.500" r="17.500" fill="url(#o)" stroke="#1a2c40"/><path d="M4 14Q8 3 18.500 3T33 14Q18 20 4 14Z" fill="#fff" opacity=".35"/><path d="M9 11Q13 8 17.500 11L16 18Q12 16 8 18Z" fill="#f0562a"/><path d="M19 11.500Q23 14 28 11L26 18Q21 21 17.500 18.500Z" fill="#8cc63e"/><path d="M7.500 20Q12 17 16 20L14 27Q10 25 6 27Z" fill="#4aa6e8"/><path d="M17.500 20.500Q21 23 26 20L24 27Q19 30 15.500 27.500Z" fill="#fcc62e"/>`))}
      ${slot(18, html`<div class="grip"></div>`)}
      ${slot(67, S(32, 31, "0 0 32 31", svg`<path d="M28 17H11Q12 22 17 22Q20 22 22 20H28Q25 28 16 28Q5 27 5 17Q6 7 16 6Q27 6 28 17ZM11 13H22Q21 10 16.500 10Q12 10 11 13Z" fill="#3fb0ee" stroke="#1c6cb8"/><path d="M3 29Q-2 22 12 10Q24 0 30 2Q32 4 29 9Q30 4 26 4Q18 5 9 15Q2 24 5 27Q7 28 10 26Q6 30 3 29Z" fill="#f7c52a" stroke="#c8921a" stroke-width=".5"/>`))}
      ${slot(59, S(34, 30, "0 0 34 30", svg`<path d="M1 2H12L14 5H32V28H2Z" fill="#e9c766" stroke="#a8873a"/><path d="M4 5H13V9H4Z" fill="#fff"/><path d="M6 3H8V7H6Z" fill="#3aa63a"/><path d="M14 6H28V10H14Z" fill="#fff"/><path d="M15 6H17V8H15Z" fill="#d33"/><path d="M22 6H26V9H22Z" fill="#3a78d8"/><path d="M1 10H32L33 28H2Z" fill="#f6e19a" stroke="#c9a954"/><path d="M6 29V21Q6 17 11 17H23Q28 17 28 21V29H22V22H12V29Z" fill="#a9d4ee" stroke="#6ea9cf"/>`), "on")}
      ${slot(64, S(26, 25, "0 0 28 25", svg`<rect x="9" y="1" width="17" height="22" fill="#6fb4e2" stroke="#3e86bb"/><rect x="5" y="1" width="17" height="23" fill="#8ec6ec" stroke="#3e86bb"/><rect x=".5" y="1.500" width="19" height="22" fill="#a8d6f4" stroke="#4b93c6"/><circle cx="11" cy="12.500" r="9" fill="#f08018" stroke="#fff"/><path d="M8 7L16 12.500L8 18Z" fill="#fff"/>`))}
      ${slot(58, S(31, 31, "0 0 31 31", svg`<circle cx="16" cy="15" r="13" fill="#24509c"/><path d="M15 4Q26 3 29 13Q31 25 20 29Q8 32 3 22Q0 13 5 5L6 9L10 5L12 9Q16 8 17 11L13 14Q12 20 18 20Q24 20 23 12Q21 6 15 4Z" fill="#f07a1c"/><path d="M5 17Q8 26 17 26Q26 26 28 16Q29 26 20 29Q8 31 4 22Z" fill="#f9b52c"/>`))}
      ${slot(66, S(30, 30, "0 0 30 30", svg`<circle cx="15" cy="15" r="15" fill="#f4c430"/><path d="M15 0A15 15 0 0 1 28.500 8.500H15L9 17L2.500 7A15 15 0 0 1 15 0Z" fill="#dc4437"/><path d="M2 7.500L9 19L16 21L13 30A15 15 0 0 1 2 7.500Z" fill="#2fa24d"/><circle cx="15" cy="15" r="7" fill="#fff"/><circle cx="15" cy="15" r="5.500" fill="#4a88ee"/>`))}
      ${slot(1, nothing)}
      ${slot(51, siopel(32), "on hot")}${slot(5, nothing, "on")}${slot(5, nothing, "on")}
      ${slot(60, S(31, 30, "0 0 31 30", svg`<rect x="14" y="4" width="16" height="22" fill="#fff" stroke="#1d7044"/><path d="M19 8H28M19 12H28M19 16H28M19 20H28" stroke="#1d7044" stroke-width="2"/><path d="M0 4L18 0V30L0 26Z" fill="#1d7044"/><text x="4" y="20" font-size="15" font-weight="700" fill="#fff" font-family="Open Sans">X</text>`), "on")}
      <div class="tray"><div class="grip"></div>${slot(34, html`<span style="letter-spacing:-.3px;margin-top:-6px">ES</span>`)}${slot(20, S(8, 4, "0 0 8 4", svg`<path d="M0 4L4 0L8 4Z" fill="#fff"/>`))}
        ${slot(28, S(15, 15, "0 0 15 15", svg`<path d="M1 0V15" stroke="#fff" stroke-width="1.500"/><path d="M3 1Q6 0 8 2Q11 4 14 4V10Q11 10 8 8Q6 7 3 8Z" fill="#fff"/>`))}
        ${slot(22, S(16, 15, "0 0 16 15", svg`<rect x="4" y="3" width="11" height="8" fill="none" stroke="#fff" stroke-width="1.500"/><path d="M7 14H13M10 11V14M2 0V5M0 2H5V6H0ZM2.500 6V13H7" stroke="#fff" fill="none"/>`))}
        ${slot(26, S(16, 15, "0 0 16 15", svg`<path d="M0 5H3L7 1V14L3 10H0Z" fill="#fff"/><path d="M9 5Q11 7.500 9 10M11 3Q14 7.500 11 12M13 1.500Q17.500 7.500 13 13.500" stroke="#fff" fill="none"/>`))}
        <div class="clock">12:24 p.m.<br>19/02/2019</div></div><div class="show"></div>`;
  }
}
customElements.define("task-bar", TaskBar);

/* ---------- application ---------- */
class AppRoot extends LitElement {
  static styles = [base, winBtnCss, css`
    :host { display: flex; flex-direction: column; width: 1680px; height: 1050px; overflow: hidden; background: #fff; }
    .xl { height: 20px; flex: none; display: flex; align-items: center; background: #fff; padding-left: 10px; color: #a6a6a6; position: relative; }
    .xl .q { display: flex; align-items: center; width: 772px; padding-top: 2px; }
    .xl .q svg { margin-right: 14px; }
    .xl .nm { font: 11.500px/14px "Open Sans", sans-serif; letter-spacing: -0.2px; padding-top: 5px; }
    .xl .sys { margin-left: auto; padding: 2px 9px 0 0; display: flex; gap: 18px; align-items: center; }
    .app { flex: 1; min-height: 0; display: flex; flex-direction: column; background: #e5e5e5; border-top: 1px solid #000; border-left: 1px solid #000; border-right: 1px solid #000; box-shadow: inset 1px 1px #fff; }
    .tb { height: 17px; margin: 2px 8px 1px 5px; display: flex; flex: none; }
    .cap { flex: 1; display: flex; align-items: center; gap: 2px; background: linear-gradient(#6286b8, #46648e); border: 1px solid #555; border-width: 1px 0 0 1px; color: #fff; font-weight: 700; text-shadow: 1px 1px #111; letter-spacing: 0.06px; overflow: hidden; }
    .cap span { padding-bottom: 1px; }
    .main { flex: 1; min-height: 0; margin: 0 2px; border: 1px solid #606060; border-bottom: 0; display: flex; flex-direction: column; }
    .menu { height: 20px; flex: none; border-bottom: 1px solid #fff; display: flex; gap: 10px; padding: 3px 7px 0; letter-spacing: -0.05px; }
    .tools { height: 35px; flex: none; display: flex; align-items: center; padding: 0 0 3px 5px; border-bottom: 1px solid #aaa; }
    .slot { display: flex; align-items: center; justify-content: center; flex: none; }
    .logo { margin-left: auto; display: flex; align-items: center; gap: 2px; height: 32px; }
    .led { width: 23px; height: 31px; background: #efefef; border-left: 1px solid #fff; padding: 4px 3px; display: grid; grid-template-columns: 1fr 1fr; gap: 2px; }
    .led i { height: 6px; background: #008000; grid-column: span 2; } .led i.o { grid-column: auto; background: #fff; border: 1px solid #aaa; border-width: 1px 0 0 1px; }
    .mid { flex: 1; min-height: 0; display: flex; }
    .desk { flex: 1; position: relative; background: #c0c0c0; overflow: hidden; }
    .sb { background: #f4f1f4; display: flex; flex: none; align-items: stretch; }
    .sb.v { width: 16px; flex-direction: column; } .sb.h { height: 16px; }
    .sbb { width: 16px; height: 16px; flex: none; border: 1px solid #444; outline: 1px solid #fff; outline-offset: -2px; box-shadow: inset -2px -2px #aaa; background: #e8e8e8; display: flex; align-items: center; justify-content: center; }
    .sbt { border: 1px solid #555; outline: 1px solid #fff; outline-offset: -2px; background: #e5e5e5; flex: none; }
    .stat { height: 20px; flex: none; display: flex; border-top: 1px solid #fff; overflow: hidden; white-space: pre; line-height: 13.500px; }
    .stat > div { overflow: hidden; height: 19px; padding-top: 1px; }
    /* tool windows */
    .tool { display: flex; flex-direction: column; overflow: hidden; background: #e5e5e5; }
    .tab { height: 20px; width: 76px; border: 1px solid #777; border-width: 1px 1px 0 1px; border-left-color: #fff; border-top-color: #fff; border-radius: 5px 0 0 0; padding: 3px 0 0 5px; flex: none; white-space: pre; overflow: hidden; }
    .gp { border: 1px solid #666; flex: none; display: flex; background: #fff; overflow: hidden; }
    .rw { display: flex; height: 21px; width: max-content; } .rw > div { border-right: 1px solid #bbb; border-bottom: 1px solid #bbb; padding: 4px 1px 0 2px; overflow: hidden; white-space: pre; flex: none; line-height: 13px; }
    .rw.hd { height: 20px; } .rw.hd > div { font-weight: 700; background: #e5e5e5; border: 1px solid #777; border-width: 0 1px 2px 0; padding-top: 3px; letter-spacing: 0; box-shadow: inset 1px 1px #fff; }
    .rw .s { background: #e5e5e5; border: 1px solid #777; border-width: 0 2px 2px 0; box-shadow: inset 1px 1px #fff; padding: 5px 0 0 1px; }
    .rw.a > div:not(.s) { background: #e4e4e4; }
    .b { border: 1px solid #777; outline: 1px solid #fff; outline-offset: -2px; box-shadow: inset -2px -2px #b8b8b8; background: #e5e5e5; display: flex; align-items: center; justify-content: center; gap: 4px; letter-spacing: 0.05px; }
    .mon { display: flex; flex-direction: column; padding-left: 4px; background: #c6dbee; position: relative; }
    .mon .strip { height: 8px; flex: none; background: linear-gradient(90deg, #dfe8f0, #a9c6e2); overflow: hidden; font-weight: 700; line-height: 7px; white-space: pre; color: #333; position: relative; }
    .mon .strip div { height: 2px; display: flex; align-items: flex-end; overflow: hidden; }
    .mt { height: 26px; background: #e5e5e5; display: flex; align-items: center; flex: none; padding-bottom: 8px; }
    .mg { flex: 1; min-height: 0; overflow: hidden; background: #fff; border-top: 2px solid #6a6a6a; }
    .mr { display: flex; height: 19px; } .mr > div { border-right: 1px solid #bdbdbd; border-bottom: 1px solid #bdbdbd; padding: 3px 0 0 2px; color: #008000; flex: none; }
    .mr.alt > div { background: #e4e4e4; }
    .mr .n, .mr .B { color: #00f; font-weight: 700; } .mr .K { color: #000; font-weight: 700; } .mr > .h, .mr.alt > .h { background: #9cbf87; }
    .mr .n { padding-left: 1px; letter-spacing: 0; }
    .mr .x { box-shadow: inset 0 0 0 2px #f00; }
    .mr.hd > div { background: #0ff; color: #808000; border: 1px solid #b89a9a; border-top-color: #fff; border-left-color: #fff; padding: 2px 0 0 3px; letter-spacing: -0.2px; }
    .mr.hd > div.n { color: #00f; letter-spacing: 0; display: flex; padding: 2px 9px 0 1px; justify-content: space-between; } .mr.hd .n svg { margin-top: 5px; }
  `];
  place(x: number, y: number, r: number, b: number) { return `left:${x - 4}px;top:${y - 97}px;width:${r - x}px;height:${b - y}px`; }
  book(k: string) {
    const b = books[k];
    return html`<mdi-window heading=${b.title} btns=${b.btns ?? "umxc"} style=${this.place(b.x, b.y, b.r, b.b)}><book-view .book=${b}></book-view></mdi-window>`;
  }
  monitor() {
    const c = (v: string, w: number) => { const m = /^([KBhx]?)(.*)$/.exec(v)!; return html`<div class=${m[1]} style="width:${w}px">${m[2]}</div>`; };
    return html`<mdi-window class="narrow" active heading="Rueda CONH: SISTEMA ELECTRÓNICO ..." btns="umx" style=${this.place(7, 98, 302, 381)}><div class="mon">
      <div class="strip"><div>${" Rueda CONH: SISTEMA ELECTRÓNICO DE NEGOCIACIÓN..."}</div></div>
      <div class="mt">${monTools.map(([i, w]) => html`<div class="slot" style="width:${w}px">${icons[i]()}</div>`)}</div>
      <div class="mg"><div class="mr hd"><div class="n" style="width:139px">Mnemoténico${down(6)}</div><div style="width:73px">Tasa Eq B</div><div style="width:61px">Tasa Eq O</div></div>
      ${monRows.map((r, i) => { const [n, a, b] = r.split("|"); return html`<div class="mr ${i % 2 ? "" : "alt"}"><div class="n" style="width:139px">${n} 000</div>${c(a, 73)}${c(b, 61)}</div>`; })}</div>
    </div></mdi-window>`;
  }
  ops() {
    const rows: [string, string, string, string, string][] = [["Con", "TFIT10040522", "", "27,531,700,000", "#008000"], ["Ven", "TFIT15260826", "6.405", "1,000,000,000", "#00f"], ["Ven", "TFIT15260826", "6.405", "1,000,000,000", "#00f"], ["Ven", "TFIT15260826", "6.405", "1,000,000,000", "#00f"]];
    const w = [12, 21, 79, 47, 83, 33];
    return html`<mdi-window heading="Operaciones" icon="siopel" style=${this.place(2, 718, 305, 961)}><div class="tool">
      <div class="tab">Todas (1627)</div>
      <div class="gp" style="height:133px"><div style="width:275px;overflow:hidden">
        <div class="rw hd">${["", "Op", "Desc. corta", "Equivale", "Cantidad", "Fecha"].map((t, i) => html`<div style="width:${w[i]}px">${t}</div>`)}</div>
        ${rows.map((r, i) => html`<div class="rw ${i % 2 ? "" : "a"}" style="color:${r[4]}"><div class="s" style="width:${w[0]}px">${i === 3 ? big("r") : nothing}</div><div style=${`width:${w[1]}px;` + (i === 3 ? "background:#4a6c9c;color:#fff" : "")}>${r[0]}<br> UP</div><div style="width:${w[2]}px">${r[1]}</div><div style="width:${w[3]}px;text-align:right">${r[2]}</div><div style="width:${w[4]}px;text-align:right">${r[3]}</div><div style="width:${w[5]}px">19/02/2019</div></div>`)}
        <div style="height:8px"></div><div class="sb h" style="margin:0 2px 0 1px"><div class="sbb">${big("l")}</div><div class="sbt" style="width:16px"></div><div style="flex:1"></div><div class="sbb">${big("r")}</div></div>
      </div><div class="sb v" style="height:112px"><div class="sbb">${big("u")}</div><div style="flex:1"></div><div class="sbb"></div><div class="sbb">${big("d")}</div></div></div>
      <div style="display:flex;flex:1"><div style="width:140px;flex:none;padding:11px 0 0 8px;white-space:pre;overflow:hidden">Ordenado por: Hora(Ascendente)
        <div style="display:flex;align-items:center;margin-left:4px"><div class="chk">${cross(8, 2.4)}</div><span style="margin:0 22px 0 4px">Ir a <u>U</u>ltima</span><div class="chk"></div><span style="margin-left:4px">Ver <u>H</u>oras</span></div></div>
        <div style="display:grid;grid-template:25px 25px / 74px 5px 74px;row-gap:1px;padding-top:6px;align-items:center"><div class="b" style="height:25px">${icons.eraser()}Baja</div><i></i><div class="b" style="height:25px">${icons.exportar()}<span><u>E</u>xportar</span></div><div class="b" style="height:25px"><span><u>R</u>eset Orden</span></div><span style="overflow:hidden">R</span><div class="b" style="height:25px">${icons.printer()}<span><u>I</u>mprimir</span></div></div></div>
    </div></mdi-window>`;
  }
  props() {
    const rows = ["CPA", "VTA", "*VTA", "VTA", "CPA", "VTA", "VTA", "VTA"];
    return html`<mdi-window heading="Ofertas" icon="siopel" style=${this.place(8, 385, 300, 717)}><div class="tool">
      <div class="tab">Propias</div>
      <div class="gp" style="height:222px;flex-direction:column;padding-left:1px"><div class="rw hd"><div style="width:12px"></div><div style="width:60px">Tipo</div></div>
      ${rows.map((r, i) => html`<div class="rw" style="color:${r[0] === "*" ? "#000" : "#00f"}"><div class="s" style="width:12px">${i === 7 ? big("r") : nothing}</div><div style="width:60px">${r.replace("*", "")}</div></div>`)}
      <div style="height:14px;flex:none"></div><div class="sb h"><div class="sbb">${big("l")}</div><div class="sbt" style="width:60px"></div></div></div>
      <div style="padding:10px 0 0 9px">Ordenado por:<div style="display:flex;padding:12px 0 0 4px"><div class="chk">${cross(8, 2.4)}</div></div></div>
    </div></mdi-window>`;
  }
  render() {
    const g = "#b8b8b8";
    return html`
      <div class="xl"><div class="q">
        ${S(16, 16, "0 0 16 16", svg`<rect x="7" y="2" width="8.500" height="12" fill="#fff" stroke="#1d7044"/><path d="M10 5H15M10 8H15M10 11H15" stroke="#1d7044" stroke-width="1.500"/><path d="M0 1.500L10 0V16L0 14.500Z" fill="#1d7044"/><text x="1.500" y="12" font-size="9" font-weight="700" fill="#fff" font-family="Open Sans">X</text>`)}
        ${S(15, 14, "0 0 15 14", svg`<path d="M1 1H14V13H1Z" fill="#fff" stroke="#7d4fa5" stroke-width="2"/><path d="M2 8H13V14H2Z" fill="#7d4fa5"/><rect x="4" y="10" width="4" height="4" fill="#fff"/>`)}
        <svg width="26" height="14" viewBox="0 0 26 14"><path d="M1 5H9Q14 5 13 9Q12 12 8 12M5 1L1 5L5 9" fill="none" stroke="#b4b4b4" stroke-width="2"/><path d="M20 6H25L22.500 8.500Z" fill="#b4b4b4"/></svg>
        <svg width="26" height="14" viewBox="0 0 26 14"><path d="M14 5H6Q1 5 2 9Q3 12 7 12M10 1L14 5L10 9" fill="none" stroke="#b4b4b4" stroke-width="2"/><path d="M20 6H25L22.500 8.500Z" fill="#b4b4b4"/></svg>
        ${S(6, 7, "0 0 6 7", svg`<path d="M0 1H6" stroke="#666"/><path d="M0 3.500H6L3 6.500Z" fill="#666"/>`)}
      </div><div class="nm">Spreads Matrix - Excel</div>
      <div class="sys"><b style="font:700 14px/14px Open Sans;color:${g}">?</b>
        ${S(13, 11, "0 0 13 11", svg`<path d="M.5 .5H12.500V10.500H.5ZM.5 3H12.500M6.500 9V5M4.500 7L6.500 5L8.500 7" fill="none" stroke=${g}/>`)}
        <span style="padding:4px 0 0 4px">${S(9, 3, "0 0 9 3", svg`<rect width="9" height="2.500" fill=${g}/>`)}</span>
        ${S(11, 10, "0 0 11 10", svg`<path d="M.5 3.500H8V9.500H.5ZM2.500 3V.5H10.500V6.500H8" fill="none" stroke=${g} stroke-width="1.300"/>`)}
        ${S(11, 10, "0 0 11 10", svg`<path d="M1 0L10 10M10 0L1 10" stroke=${g} stroke-width="2"/>`)}</div></div>
      <div class="app">
        <div class="tb"><div class="cap">${siopel(15)}<span>V-BRC - Suite SIOPEL: Negociación - Versión 8.20.1</span></div>${winBtns("dumrc")}</div>
        <div class="main">
          <div class="menu"><span><u>N</u>egociaciones</span><span><u>C</u>onsultas</span><span><u>O</u>pciones</span><span><u>V</u>entanas</span><span>A<u>y</u>uda</span></div>
          <div class="tools">${mainTools.map(([i, w]) => html`<div class="slot" style="width:${w}px">${icons[i]()}</div>`)}
            <div class="logo">${S(32, 30, "0 0 32 30", svg`<path d="M4.500 0V29M8 0V29" stroke="#9fc7b4" stroke-width="1.300"/><path d="M10 9H18V24H10M10 16H18" stroke="#7c9c8e" fill="none" stroke-width="1.200"/><text x="-1" y="21" font-size="22" fill="#0b7a45" font-family="Liberation Sans">S</text><text x="18" y="24" font-size="18" font-style="italic" font-weight="700" fill="#0b6b3f" font-family="Liberation Sans">N</text>`)}<div class="led"><i></i><i></i><i class="o"></i><i class="o"></i></div></div></div>
          <div class="mid"><div class="desk">
            <mdi-window heading="Consulta" icon="siopel" style=${this.place(3, 944, 212, 973)}></mdi-window>
            ${this.props()}${this.book("b2")}${this.monitor()}
            ${["b3", "b4", "b6b", "b5", "b6", "b11", "b14", "b13", "b12", "b10", "b9"].map(k => this.book(k))}
            <mdi-window class="dlg" heading="Ingreso de Oferta para CONH" btns="mc" style=${this.place(479, 579, 891, 968)}><order-form .d=${{ especie: "1 TFIT16280428 000 COP", cant: "2,000", precio: "95.605", ref: "95.644 (19/02/2019)", tasa: "6.65", hora: "12:11:08" }}></order-form></mdi-window>
            ${this.book("b8")}${this.book("b7")}${this.ops()}
            <mdi-window class="dlg" active heading="Ingreso de Oferta para CONH" btns="mc" style=${this.place(42, 363, 454, 752)}><order-form .d=${{ especie: "1 TFIT16300632 000 COP", cant: "1,000", precio: "99.52", ref: "99.52 (19/02/2019)", tasa: "7.052", hora: "11:57:16", sel: true }}></order-form></mdi-window>
          </div>
          <div class="sb v"><div class="sbb">${big("u")}</div><div class="sbt" style="height:816px;margin-top:1px"></div><div style="flex:1"></div><div class="sbb" style="margin-bottom:2px">${big("d")}</div></div></div>
          <div class="sb h" style="margin:1px 18px 0 0"><div class="sbb" style="margin-left:1px">${big("l")}</div><div class="sbt" style="width:1617px;margin-left:4px"></div><div class="sbb">${big("r")}</div></div>
          <div class="stat"><div style="width:181px;border-right:1px solid #aaa;padding-left:1px">Agente V164-M
Operador: 10 MARIA DEL PILAR PINTO</div><div style="flex:1;padding-left:4px">Vol.op en SEN:  7,284,919,035,568 COP
Mem: 222K Cpu: 100% GPI: 100% Ux: 100%</div><div style="width:29px;background:#3399ff;margin:2px 1px 0 0"></div><div style="width:80px;border-left:1px solid #999;text-align:center">19/02/2019
12:24:08</div></div>
        </div>
      </div>
      <task-bar></task-bar>`;
  }
}
customElements.define("app-root", AppRoot);
